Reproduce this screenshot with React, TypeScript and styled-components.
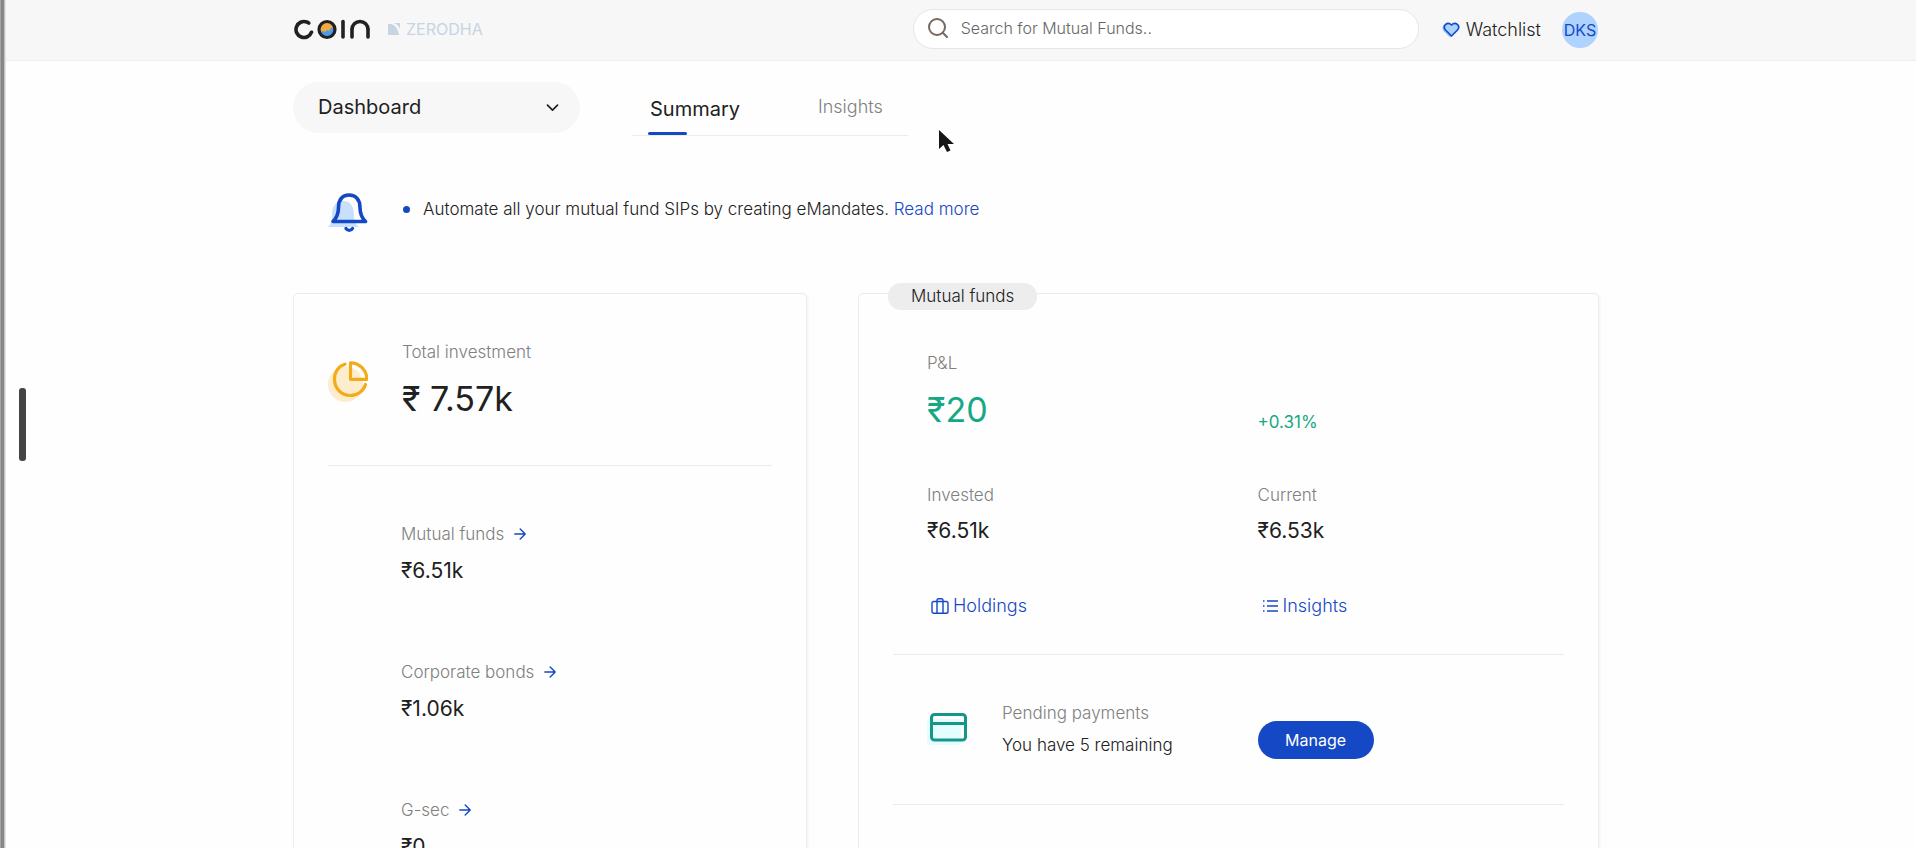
import React from "react";
import styled, { createGlobalStyle } from "styled-components";

const blue = "#1548c4";
const ink = "#212121";
const muted = "#808080";
const line = "#ececec";
const green = "#16a884";

const GlobalStyle = createGlobalStyle`
  *, *::before, *::after { box-sizing: border-box; }
  body {
    margin: 0;
    background: #fefefe;
    color: ${ink};
    font-family: Inter, "Liberation Sans", sans-serif;
    font-size: 17px;
    font-weight: 300;
    line-height: 24px;
  }
  button, input, select { font: inherit; color: inherit; }
  a { text-decoration: none; color: inherit; }
  h2, p, dl, dt, dd, ul { margin: 0; padding: 0; font-weight: inherit; }
  svg { display: block; flex: none; }
`;

const Shell = styled.div`
  display: flex;
  height: 100vh;
  position: relative;
`;

const WindowEdge = styled.div`
  flex: none;
  width: 6px;
  background: linear-gradient(to right, #a3a3a3 1px, #878787 1px 4px, #c4c4c4 4px 5px, #e4e4e4 5px);
`;

const Page = styled.div`
  flex: 1;
  min-width: 0;
  overflow: auto;
  scrollbar-width: none;
`;

const Container = styled.div`
  width: 100%;
  max-width: 1306px;
  margin: 0 auto;
`;

const Header = styled.header`
  padding-right: 30px;
  background: #f7f7f7;
  border-bottom: 1px solid #eeeeee;
`;

const HeaderRow = styled(Container)`
  display: flex;
  align-items: center;
  height: 60px;
  padding-right: 1px;
`;

const Brand = styled.a`
  display: flex;
  align-items: center;
  gap: 17px;
  padding-bottom: 2px;
`;

const Parent = styled.span`
  display: flex;
  align-items: center;
  gap: 6px;
  color: #c6d4e4;
  font-size: 16px;
  font-weight: 400;
`;

const SearchBox = styled.label`
  display: flex;
  align-items: center;
  gap: 13px;
  width: 506px;
  height: 40px;
  margin: 0 0 2px auto;
  padding: 0 14px 2px;
  border: 1px solid #e6e6e6;
  border-radius: 20px;
  background: #ffffff;
`;

const SearchInput = styled.input`
  flex: 1;
  min-width: 0;
  padding: 0;
  border: 0;
  outline: 0;
  background: none;
  font-size: 16px;
  &::placeholder { color: #666666; opacity: 1; }
`;

const WatchLink = styled.a`
  display: flex;
  align-items: center;
  gap: 6px;
  margin-left: 23px;
  font-size: 18px;
`;

const Avatar = styled.button`
  width: 36px;
  height: 36px;
  margin-left: 21px;
  padding: 0;
  border: 0;
  border-radius: 50%;
  background: #aed3ff;
  color: ${blue};
  font-size: 16px;
  font-weight: 400;
`;

const Main = styled.main`
  padding: 21px 30px 40px 0;
`;

const Toolbar = styled.div`
  display: flex;
  align-items: flex-start;
  gap: 52px;
`;

const Picker = styled.div`
  display: grid;
  width: 287px;
  height: 51px;
  align-items: center;
  & > * { grid-area: 1 / 1; }
  & > svg { justify-self: end; margin-right: 21px; pointer-events: none; }
`;

const PickerSelect = styled.select`
  appearance: none;
  width: 100%;
  height: 100%;
  padding: 0 48px 2px 25px;
  border: 0;
  border-radius: 26px;
  background: #f7f7f7;
  font-size: 20px;
  font-weight: 400;
`;

const Tabs = styled.nav`
  display: flex;
  align-items: stretch;
  gap: 78px;
  width: 276px;
  height: 54px;
  padding-left: 18px;
  border-bottom: 1px solid ${line};
`;

const Tab = styled.a<{ $active?: boolean }>`
  display: flex;
  flex-direction: column;
  justify-content: space-between;
  padding-top: ${(p) => (p.$active ? 15 : 13)}px;
  color: ${(p) => (p.$active ? ink : muted)};
  font-size: ${(p) => (p.$active ? 20 : 18)}px;
  font-weight: ${(p) => (p.$active ? 400 : 300)};
  &::after {
    content: "";
    width: 39px;
    height: 3px;
    margin-left: -2px;
    border-radius: 2px;
    background: ${(p) => (p.$active ? blue : "transparent")};
  }
`;

const Notice = styled.section`
  display: flex;
  align-items: flex-start;
  gap: 35px;
  margin: 57px 0 60px;
  padding-left: 35px;
`;

const NoticeList = styled.ul`
  list-style: none;
`;

const NoticeItem = styled.li`
  display: flex;
  align-items: center;
  gap: 13px;
  line-height: 32px;
  &::before {
    content: "";
    width: 7px;
    height: 7px;
    border-radius: 50%;
    background: ${blue};
  }
  a { color: ${blue}; }
`;

const Cards = styled.div`
  display: grid;
  grid-template-columns: 514fr 741fr;
  gap: 51px;
`;

const Card = styled.section`
  position: relative;
  padding: 0 34px 60px;
  border: 1px solid ${line};
  border-radius: 5px;
  box-shadow: 1px 1px 3px rgba(0, 0, 0, 0.05);
`;

const Badge = styled.h2`
  position: absolute;
  top: -11px;
  left: 29px;
  padding: 1px 23px 2px;
  border-radius: 13px;
  background: #ededed;
  font-size: 17px;
`;

const Label = styled.dt`
  display: flex;
  align-items: center;
  gap: 10px;
  color: ${muted};
  a { color: ${blue}; }
`;

const Value = styled.dd<{ $large?: boolean; $positive?: boolean }>`
  margin-top: ${(p) => (p.$large ? 11 : 10)}px;
  font-size: ${(p) => (p.$large ? 34 : 21)}px;
  font-weight: 400;
  line-height: ${(p) => (p.$large ? 48 : 28)}px;
  color: ${(p) => (p.$positive ? green : ink)};
`;

const Total = styled.div`
  display: flex;
  align-items: center;
  gap: 34px;
  padding: 46px 0 42px;
  border-bottom: 1px solid ${line};
`;

const Holdings = styled.div`
  display: grid;
  gap: 75px;
  padding: 56px 0 0 73px;
  dd { margin-top: 11px; }
`;

const Stats = styled.div`
  display: grid;
  grid-template-columns: 330fr 306fr;
  row-gap: 49px;
  padding: 57px 0 36px 34px;
  border-bottom: 1px solid ${line};
`;

const Change = styled.p`
  align-self: end;
  color: ${green};
  font-weight: 400;
`;

const ActionLink = styled.a`
  display: flex;
  align-items: center;
  gap: 4px;
  padding-left: 4px;
  color: ${blue};
  font-size: 18px;
`;

const Payments = styled.div`
  display: grid;
  grid-template-columns: 330fr 306fr;
  align-items: start;
  padding: 46px 0 45px 34px;
  border-bottom: 1px solid ${line};
`;

const PaymentInfo = styled.div`
  display: flex;
  align-items: center;
  gap: 35px;
  p { color: ${muted}; }
  p + p { margin-top: 8px; color: ${ink}; }
`;

const PrimaryButton = styled.button`
  justify-self: start;
  width: 116px;
  height: 38px;
  margin-top: 20px;
  padding: 0;
  border: 0;
  border-radius: 19px;
  background: ${blue};
  color: #ffffff;
  font-size: 16px;
  font-weight: 400;
`;

const DragHandle = styled.div`
  position: absolute;
  top: 388px;
  left: 19px;
  width: 7px;
  height: 73px;
  border-radius: 3px;
  background: #444444;
`;

const Pointer = styled.svg`
  position: absolute;
  top: 129px;
  left: 938px;
`;

function CoinLogo() {
  return (
    <svg width="78" height="21" viewBox="0 0 78 21" fill="none" stroke={ink} strokeWidth="3.600" strokeLinecap="round" role="img" aria-label="Coin">
      <circle cx="11" cy="10.500" r="8" strokeDasharray="39.800 10.500" transform="rotate(20 11 10.500)" />
      <circle cx="34" cy="10.500" r="7" fill="#f2ab3d" stroke="none" />
      <path d="M27 13l3-1 2 1 2-2 2 1 2-3 3-1v5l-3 4-4 1-4-1z" fill="#4b9be8" stroke="none" />
      <circle cx="34" cy="10.500" r="8" strokeWidth="3.200" />
      <line x1="50" y1="2.500" x2="50" y2="18" />
      <circle cx="67" cy="10.500" r="8" strokeDasharray="25.130 25.130" transform="rotate(180 67 10.500)" strokeLinecap="butt" />
      <line x1="59" y1="10.500" x2="59" y2="18" />
      <line x1="75" y1="10.500" x2="75" y2="18" />
    </svg>
  );
}

function ZerodhaMark() {
  return (
    <svg width="12" height="12" viewBox="0 0 12 12" fill="#c6d4e4" aria-hidden="true">
      <path d="M0 1h3c4 1 7 5 8 11H0z" />
      <path d="M6 0h6v6C11 3 9 1 6 0z" />
    </svg>
  );
}

function SearchIcon() {
  return (
    <svg width="20" height="20" viewBox="0 0 20 20" fill="none" stroke="#76695f" strokeWidth="2" strokeLinecap="round" aria-hidden="true">
      <circle cx="9" cy="9" r="8" />
      <path d="M14.800 14.800L19 19" />
    </svg>
  );
}

function HeartIcon() {
  return (
    <svg width="18" height="16" viewBox="0 0 18 16" aria-hidden="true">
      <path d="M8 15.500L1.500 9C-2 4 4 0 8 4c4-4 9 0 6 5z" fill="#8fc3ff" />
      <path d="M9.500 14L3.500 8C0 3.500 5.500-1 9.500 3c4-4 9.500.5 6 5z" fill="#a9d2ff" stroke={blue} strokeWidth="1.600" strokeLinejoin="round" />
    </svg>
  );
}

function ChevronIcon() {
  return (
    <svg width="13" height="8" viewBox="0 0 13 8" fill="none" stroke={ink} strokeWidth="1.700" strokeLinecap="round" strokeLinejoin="round" aria-hidden="true">
      <path d="M1.500 1.200L6.500 6.200l5-5" />
    </svg>
  );
}

function BellIcon() {
  return (
    <svg width="40" height="40" viewBox="0 0 40 40" fill="none" strokeLinejoin="round" strokeLinecap="round" aria-hidden="true">
      <path d="M0 34c3-3 4-6 4-11 0-9 3-15 11-15s11 6 11 15c0 5 1 8 5 11z" fill="#c9e0fd" />
      <path d="M5 28.500c4-4 5.500-8 5.500-14C10.500 7 14 2 21 2s11 5 11 12.500c0 6 1.500 10 5.500 14z" stroke={blue} strokeWidth="3.600" />
      <path d="M18 35.500c1.500 2.500 5 2.500 6.500 0" stroke={blue} strokeWidth="3.400" />
    </svg>
  );
}

function PieIcon() {
  return (
    <svg width="40" height="41" viewBox="0 0 40 41" fill="none" stroke="#f3ab18" strokeWidth="3.200" strokeLinejoin="round" strokeLinecap="round" aria-hidden="true">
      <circle cx="17.500" cy="23.500" r="17.500" fill="#feedcd" stroke="none" />
      <path d="M22.500 1.800v16.500h16.300C38.800 9 31.500 1.800 22.500 1.800z" fill="#ffffff" stroke="none" />
      <path d="M22.500 6.500c6 1 10.500 5.500 11.500 11.800H22.500z" fill="#feedcd" stroke="none" />
      <path d="M22.500 1.800v16.500h16.300C38.800 9 31.500 1.800 22.500 1.800z" />
      <path d="M17 3.200C10.500 5 6.500 11 6.500 18.300c0 9.300 7 16.200 15.500 16.200 7.500 0 13.500-4.500 15.500-11" />
    </svg>
  );
}

function ArrowIcon() {
  return (
    <svg width="12" height="12" viewBox="0 0 12 12" fill="none" stroke={blue} strokeWidth="1.400" strokeLinecap="round" strokeLinejoin="round" aria-hidden="true">
      <path d="M.8 6h10.400M6.200 1l5 5-5 5" />
    </svg>
  );
}

function CaseIcon() {
  return (
    <svg width="18" height="16" viewBox="0 0 18 16" fill="none" stroke={blue} strokeWidth="1.400" strokeLinejoin="round" aria-hidden="true">
      <rect x="1" y="3.500" width="16" height="11.700" rx="1.800" />
      <path d="M6 15.200V2.200Q6 .8 7.400.8h3.200Q12 .8 12 2.200v13" />
    </svg>
  );
}

function ListIcon() {
  return (
    <svg width="17" height="12" viewBox="0 0 17 12" fill="none" stroke={blue} strokeWidth="1.400" aria-hidden="true">
      <path d="M5 1h11M5 6h11M5 11h11M1 1h1.500M1 6h1.500M1 11h1.500" />
    </svg>
  );
}

function CreditIcon() {
  return (
    <svg width="40" height="32" viewBox="0 0 40 32" fill="none" aria-hidden="true">
      <rect x="0" y="6" width="34" height="26" rx="2" fill="#e4fdff" />
      <rect x="4.500" y="1.500" width="34" height="25.500" rx="3" stroke="#15968a" strokeWidth="3" />
      <path d="M4.500 10.500h34" stroke="#15968a" strokeWidth="3" />
    </svg>
  );
}

const holdings = [
  { name: "Mutual funds", value: "₹6.51k" },
  { name: "Corporate bonds", value: "₹1.06k" },
  { name: "G-sec", value: "₹0" },
];

export default function App() {
  return (
    <Shell>
      <GlobalStyle />
      <WindowEdge />
      <Page>
        <Header>
          <HeaderRow>
            <Brand href="#">
              <CoinLogo />
              <Parent>
                <ZerodhaMark />
                ZERODHA
              </Parent>
            </Brand>
            <SearchBox>
              <SearchIcon />
              <SearchInput type="search" aria-label="Search for Mutual Funds" placeholder="Search for Mutual Funds.." />
            </SearchBox>
            <WatchLink href="#watchlist">
              <HeartIcon />
              Watchlist
            </WatchLink>
            <Avatar type="button">DKS</Avatar>
          </HeaderRow>
        </Header>
        <Main>
          <Container>
            <Toolbar>
              <Picker>
                <PickerSelect aria-label="Section" defaultValue="Dashboard">
                  <option>Dashboard</option>
                </PickerSelect>
                <ChevronIcon />
              </Picker>
              <Tabs>
                <Tab href="#summary" $active>Summary</Tab>
                <Tab href="#insights">Insights</Tab>
              </Tabs>
            </Toolbar>
            <Notice>
              <BellIcon />
              <NoticeList>
                <NoticeItem>
                  <span>
                    Automate all your mutual fund SIPs by creating eMandates. <a href="#mandates">Read more</a>
                  </span>
                </NoticeItem>
              </NoticeList>
            </Notice>
            <Cards>
              <Card>
                <Total>
                  <PieIcon />
                  <dl>
                    <Label>Total investment</Label>
                    <Value $large>₹ 7.57k</Value>
                  </dl>
                </Total>
                <Holdings>
                  {holdings.map((h) => (
                    <dl key={h.name}>
                      <Label>
                        {h.name}
                        <a href="#holdings" aria-label={h.name}>
                          <ArrowIcon />
                        </a>
                      </Label>
                      <Value>{h.value}</Value>
                    </dl>
                  ))}
                </Holdings>
              </Card>
              <Card>
                <Badge>Mutual funds</Badge>
                <Stats>
                  <dl>
                    <Label>P&amp;L</Label>
                    <Value $large $positive>₹20</Value>
                  </dl>
                  <Change>+0.31%</Change>
                  <dl>
                    <Label>Invested</Label>
                    <Value>₹6.51k</Value>
                  </dl>
                  <dl>
                    <Label>Current</Label>
                    <Value>₹6.53k</Value>
                  </dl>
                  <ActionLink href="#holdings">
                    <CaseIcon />
                    Holdings
                  </ActionLink>
                  <ActionLink href="#insights">
                    <ListIcon />
                    Insights
                  </ActionLink>
                </Stats>
                <Payments>
                  <PaymentInfo>
                    <CreditIcon />
                    <div>
                      <p>Pending payments</p>
                      <p>You have 5 remaining</p>
                    </div>
                  </PaymentInfo>
                  <PrimaryButton type="button">Manage</PrimaryButton>
                </Payments>
              </Card>
            </Cards>
          </Container>
        </Main>
      </Page>
      <DragHandle />
      <Pointer width="18" height="24" viewBox="0 0 18 24" aria-hidden="true">
        <path d="M1 1v19l4.500-4 3.500 7 3.500-1.500-3-6.500H16z" fill="#161616" />
      </Pointer>
    </Shell>
  );
}
